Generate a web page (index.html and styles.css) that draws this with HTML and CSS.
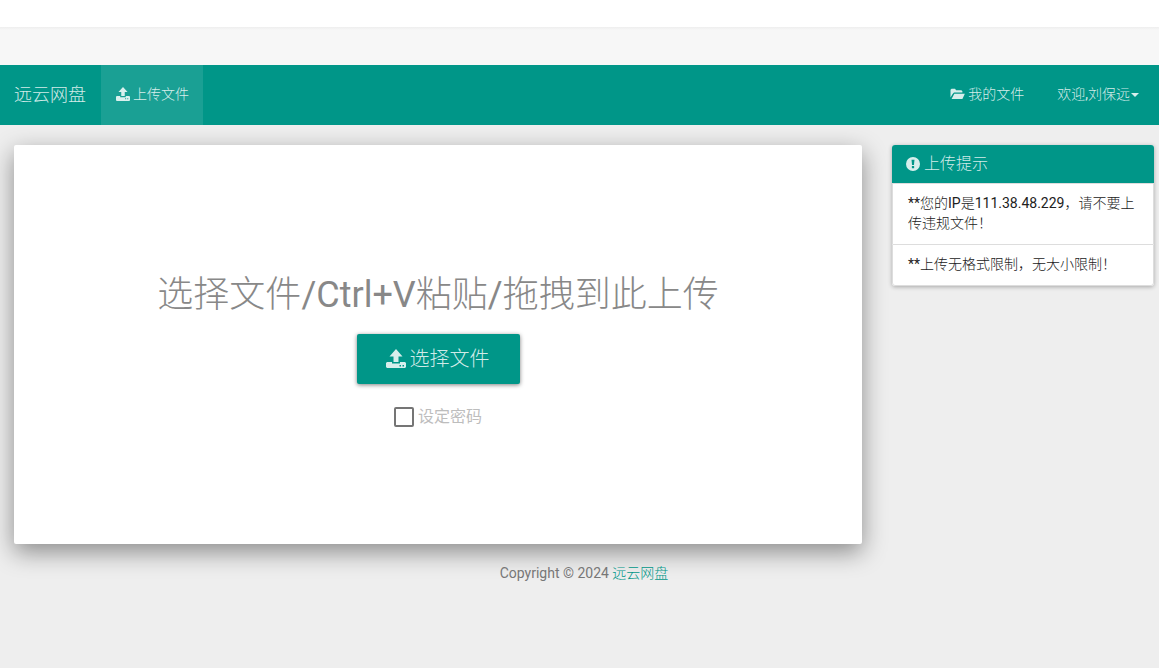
FILE: index.html
```html
<!DOCTYPE html>
<html lang="zh-CN">
<head>
<meta charset="utf-8">
<title>远云网盘</title>
<link rel="stylesheet" href="styles.css">
</head>
<body>
<div class="top-strip"></div>
<div class="sub-strip"></div>
<nav class="navbar">
  <a class="brand" href="#">远云网盘</a>
  <a class="nav-link active" href="#">
    <svg class="icon" viewBox="0 0 20 20" aria-hidden="true"><path fill="currentColor" fill-rule="evenodd" d="M10 0l6.500 7H12.500v6h-5V7H3.500zM1 13h5v1.500h8V13h5l1 1v5l-1 1H1l-1-1v-5zM13 16v1.500h1.500V16zm3 0v1.500h1.500V16z"/></svg>
    上传文件</a>
  <a class="nav-link files" href="#">
    <svg class="icon" viewBox="0 0 20 20" aria-hidden="true"><path fill="currentColor" d="M0 15V4l1.500-1.500h5L8 4.500h7.500L17 6v2H5L3 10zM5.500 9.500H20.500L17 17H1.500z"/></svg>
    我的文件</a>
  <a class="nav-link user" href="#"><span>欢迎<span class="latin">,</span>刘保远</span><span class="caret"></span></a>
</nav>
<main class="content">
  <section class="upload-card">
    <h1 class="upload-title">选择文件<span class="latin">/Ctrl+V</span>粘贴<span class="latin">/</span>拖拽到此上传</h1>
    <button class="upload-button" type="button">
      <svg class="icon-large" viewBox="0 0 20 20" aria-hidden="true"><path fill="currentColor" fill-rule="evenodd" d="M10 0l6.500 7.500H12.500V13h-5V7.500H3.500zM1 13h5v1.500h8V13h5l1 1v4l-1 1H1l-1-1v-4zM13.500 16v1.500H15V16zm3 0v1.500H18V16z"/></svg>
      选择文件</button>
    <label class="password-option"><input class="checkbox" type="checkbox">设定密码</label>
  </section>
  <aside class="tips">
    <h2 class="tips-heading">
      <svg class="icon" viewBox="0 0 16 16" aria-hidden="true"><path fill="currentColor" fill-rule="evenodd" d="M8 0a8 8 0 1 0 0 16A8 8 0 0 0 8 0zM6.300 3h3.400l-.6 6H6.900zM6.700 10.300h2.600v2.500H6.700z"/></svg>
      上传提示</h2>
    <p class="tip"><span class="latin">**</span>您的<span class="latin">IP</span>是<span class="latin">111.38.48.229</span>，请不要上传违规文件！</p>
    <p class="tip"><span class="latin">**</span>上传无格式限制，无大小限制！</p>
  </aside>
</main>
<footer class="footer"><span class="latin">Copyright © 2024</span> <a class="footer-link" href="#">远云网盘</a></footer>
</body>
</html>
```
FILE: styles.css
```css
* { box-sizing: border-box; }
body {
  margin: 0;
  background: #eee;
  color: #212121;
  font: 300 14px/20px Roboto, "Noto Sans CJK SC", sans-serif;
}
a { text-decoration: none; }
.latin { font-weight: 400; }
.top-strip { height: 27px; background: #fff; }
.sub-strip {
  height: 38px;
  background: linear-gradient(#eee, #f7f7f7 3px);
}
.navbar {
  display: flex;
  height: 60px;
  padding-right: 5px;
  background: #009688;
}
.brand, .nav-link {
  display: flex;
  align-items: center;
  color: rgba(255, 255, 255, .84);
}
.brand { padding: 0 15px 0 14px; font-size: 18px; }
.nav-link { gap: 3px; padding: 0 14px 2px 15px; }
.active { background: rgba(255, 255, 255, .1); }
.files { margin-left: auto; }
.user { padding-right: 15px; padding-left: 19px; gap: 1px; }
.icon { width: 14px; height: 14px; overflow: visible; flex: none; }
.files .icon { width: 15px; }
.caret {
  margin-top: 2px;
  border-top: 4px solid currentColor;
  border-left: 4px solid transparent;
  border-right: 4px solid transparent;
}
.content {
  display: grid;
  grid-template-columns: 848fr 262fr;
  gap: 30px;
  align-items: start;
  padding: 20px 5px 0 14px;
}
.upload-card {
  display: flex;
  flex-direction: column;
  align-items: center;
  padding: 130px 20px 115px;
  background: #fff;
  border-radius: 2px;
  box-shadow: 0 8px 25px rgba(0, 0, 0, .42);
}
.upload-title {
  margin: 0 0 19px;
  color: #888;
  font-size: 36px;
  font-weight: 300;
  line-height: 40px;
}
.upload-button {
  display: flex;
  align-items: center;
  gap: 4px;
  height: 50px;
  padding: 0 30px 0 29px;
  border: 0;
  border-radius: 2px;
  background: #009688;
  color: rgba(255, 255, 255, .84);
  font: inherit;
  font-size: 20px;
  box-shadow: 0 1px 4px rgba(0, 0, 0, .5);
}
.icon-large { width: 20px; height: 20px; }
.password-option {
  display: flex;
  align-items: center;
  gap: 4px;
  height: 24px;
  margin-top: 21px;
  color: #bdbdbd;
  font-size: 16px;
  font-weight: 400;
}
.checkbox {
  appearance: none;
  width: 20px;
  height: 20px;
  margin: 0;
  border: 2px solid #757575;
  border-radius: 2px;
}
.tips {
  background: #fff;
  border-radius: 3px;
  box-shadow: 0 1px 4px rgba(0, 0, 0, .3);
}
.tips-heading {
  display: flex;
  align-items: center;
  gap: 4px;
  height: 38px;
  margin: 0;
  padding: 0 14px;
  border-radius: 3px 3px 0 0;
  background: #009688;
  color: rgba(255, 255, 255, .84);
  font-size: 16px;
  font-weight: 300;
}
.tip {
  margin: 0;
  padding: 9px 15px 11px;
  border: 1px solid #ddd;
  border-bottom: 0;
}
.tip:last-child { border-bottom: 1px solid #ddd; border-radius: 0 0 3px 3px; }
.footer { padding: 19px 0 10px 9px; color: #777; text-align: center; }
.footer-link { color: #009688; }
```
